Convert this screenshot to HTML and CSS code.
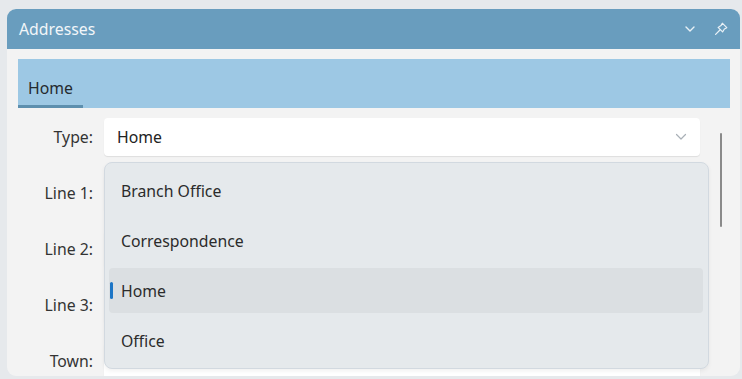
FILE: index.html
```html
<!DOCTYPE html>
<html lang="en">
    <head>
        <meta name="viewport" content="width=device-width, initial-scale=1">
        <link rel="stylesheet" href="styles.css">
    </head>
    <body>
        <div class="panel">
            <div class="panel-header">
                <span class="panel-title">Addresses</span>
                <div class="header-tools">
                    <svg class="tool" width="12" height="8" viewBox="0 0 12 8">
                        <path d="M2 2 L6 6 L10 2" fill="none" stroke="#e8f0f6" stroke-width="1.4" stroke-linecap="round" stroke-linejoin="round"/>
                    </svg>
                    <svg class="tool" width="14" height="14" viewBox="0 0 14 14">
                        <path d="M8.3 1.2 L12.8 5.7 L10.4 7 L8.6 9.9 L4.1 5.4 L7 3.6 Z" fill="none" stroke="#e8f0f6" stroke-width="1.2" stroke-linejoin="round"/>
                        <path d="M6.2 7.8 L1.6 12.4" fill="none" stroke="#e8f0f6" stroke-width="1.3" stroke-linecap="round"/>
                    </svg>
                </div>
            </div>

            <div class="panel-body">
                <div class="tabbar">
                    <div class="tab active">Home</div>
                </div>

                <div class="form-area">
                    <div class="fields">
                        <div class="field-row">
                            <label class="field-label">Type:</label>
                            <div class="input select">
                                <span>Home</span>
                                <svg width="12" height="8" viewBox="0 0 12 8">
                                    <path d="M1.5 1.5 L6 6 L10.5 1.5" fill="none" stroke="#a9b0b7" stroke-width="1.2" stroke-linecap="round" stroke-linejoin="round"/>
                                </svg>
                            </div>
                        </div>
                        <div class="field-row">
                            <label class="field-label">Line 1:</label>
                            <div class="input"></div>
                        </div>
                        <div class="field-row">
                            <label class="field-label">Line 2:</label>
                            <div class="input"></div>
                        </div>
                        <div class="field-row">
                            <label class="field-label">Line 3:</label>
                            <div class="input"></div>
                        </div>
                        <div class="field-row">
                            <label class="field-label">Town:</label>
                            <div class="input"></div>
                        </div>

                        <!--open dropdown of the Type select-->
                        <div class="dropdown">
                            <div class="option">Branch Office</div>
                            <div class="option">Correspondence</div>
                            <div class="option selected">Home</div>
                            <div class="option">Office</div>
                        </div>
                    </div>
                    <div class="scroll-track">
                        <div class="scroll-thumb"></div>
                    </div>
                </div>
            </div>
        </div>
    </body>
</html>
```

FILE: styles.css
```css
html {box-sizing: border-box;}
*, *:before, *:after {
    box-sizing: inherit;
}

body {
    margin: 0;
    padding: 9px 2px 0 7px;
    height: 379px;
    overflow: hidden;
    background-color: #e6e9ec;
    font-family: "Noto Sans", "Open Sans", sans-serif;
    font-size: 15.8px;
    color: #2b2b2b;
}

.panel {
    width: 733px;
    height: 367px;
    border-radius: 9px;
    overflow: hidden;
    background-color: #f3f3f3;
    display: flex;
    flex-direction: column;
}

.panel-header {
    height: 40px;
    flex: none;
    display: flex;
    align-items: center;
    justify-content: space-between;
    padding: 0 12px 0 12px;
    background-color: #699dbe;
}

.panel-title {
    color: #f2f6f9;
    font-size: 15.8px;
}

.header-tools {
    display: flex;
    align-items: center;
    gap: 18px;
}

.tool {
    display: block;
}

.panel-body {
    flex: 1;
    padding: 10px 10px 0 11px;
}

/*tab strip*/
.tabbar {
    height: 49px;
    background-color: #9dc8e4;
    display: flex;
    align-items: flex-end;
}

.tab {
    width: 65px;
    height: 36px;
    padding: 5px 0 0 10px;
    color: #252a2e;
}

.tab.active {
    border-bottom: 3px solid #5d8fae;
}

/*form*/
.form-area {
    display: flex;
    margin-top: 10px;
}

.fields {
    position: relative;
    width: 682px;
    display: flex;
    flex-direction: column;
    gap: 18px;
}

.field-row {
    display: flex;
    align-items: center;
    gap: 11px;
}

.field-label {
    width: 75px;
    text-align: right;
    color: #333;
}

.input {
    flex: 1;
    height: 38px;
    background-color: #fff;
    border-radius: 4px;
    box-shadow: 0 1px 1px rgba(0,0,0,0.09);
}

.select {
    display: flex;
    align-items: center;
    justify-content: space-between;
    padding: 0 13px 0 13px;
}

.select span {
    color: #222;
}

.dropdown {
    position: absolute;
    left: 86px;
    top: 44px;
    width: 605px;
    height: 207px;
    padding: 5px 5px 5px 4px;
    display: flex;
    flex-direction: column;
    gap: 5px;
    background-color: #e5e9ec;
    border: 1px solid #d2d9e0;
    border-radius: 8px;
    box-shadow: 0 2px 4px rgba(0,0,0,0.06);
}

.option {
    position: relative;
    height: 45px;
    display: flex;
    align-items: center;
    padding-left: 12px;
    border-radius: 4px;
    color: #2b2b2b;
}

.option.selected {
    background-color: #dbdfe2;
}

.option.selected:before {
    content: "";
    position: absolute;
    left: 1px;
    top: 14px;
    width: 3px;
    height: 17px;
    border-radius: 2px;
    background-color: #1d76c6;
}

.scroll-track {
    width: 30px;
    padding: 15px 0 0 20px;
}

.scroll-thumb {
    width: 2px;
    height: 94px;
    border-radius: 1px;
    background-color: #8a8a8a;
}
```
